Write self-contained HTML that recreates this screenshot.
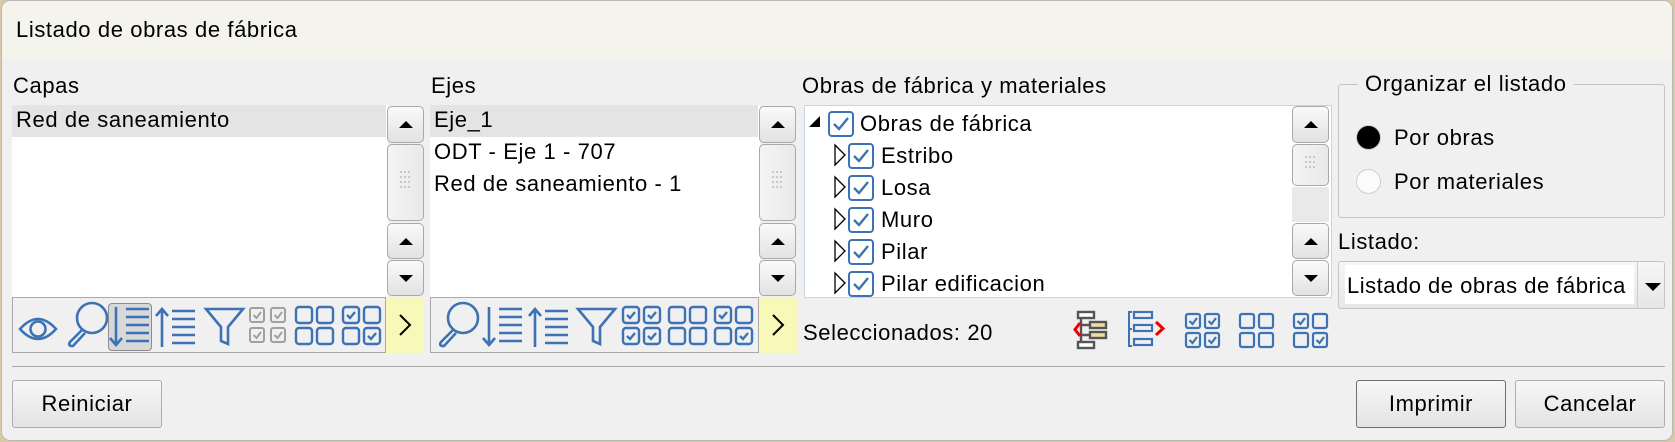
<!DOCTYPE html>
<html><head><meta charset="utf-8">
<style>
*{box-sizing:border-box;margin:0;padding:0}
body{width:1675px;height:442px;background:#d9c9a8;font-family:"Liberation Sans",sans-serif;font-size:22px;letter-spacing:0.6px;color:#000;position:relative;overflow:hidden}
.dlg{position:absolute;left:1px;top:0;width:1672px;height:441px;background:#f0f0f0;border:1px solid #b8b8b8;border-radius:9px;overflow:hidden}
.title{position:absolute;left:0;top:0;width:100%;height:58px;background:#f4f3ec}
.a{position:absolute}
.t{position:absolute;white-space:nowrap;line-height:1}
.list{position:absolute;background:#fff}
.sel{position:absolute;background:#e4e4e4}
.sb{position:absolute;width:37px;border:1px solid #a9a9a9;border-radius:5px;background:linear-gradient(#fafafa,#e2e2e2)}
.up::after,.dn::after{content:"";position:absolute;left:11px;top:14px;border-left:7px solid transparent;border-right:7px solid transparent}
.up::after{border-bottom:7px solid #000}
.dn::after{border-top:7px solid #000}
.thumb{background:linear-gradient(90deg,#f4f4f4,#e9e9e9)}
.tb{position:absolute;border:1px solid #a9a9a9;background:#f0f0f0}
.yl{position:absolute;background:#f8f8b8}
.btn{position:absolute;border:1px solid #adadad;border-radius:3px;background:linear-gradient(#f7f7f7,#e3e3e3);text-align:center;line-height:46px}
svg{position:absolute;overflow:visible}
</style></head><body>
<div class="dlg">
<div class="title"></div>
<div class="t" style="left:14px;top:18px;font-size:22px">Listado de obras de fábrica</div>

<!-- Capas -->
<div class="t" style="left:11px;top:74px">Capas</div>
<div class="list" style="left:10px;top:104px;width:376px;height:193px"></div>
<div class="sel" style="left:10px;top:104px;width:374px;height:32px"></div>
<div class="t" style="left:14px;top:108px">Red de saneamiento</div>
<div class="sb up" style="left:385px;top:105px;height:37px"></div>
<div class="sb thumb" style="left:385px;top:143px;height:77px"></div>
<svg style="left:398px;top:170px" width="12" height="22"><g fill="#c8c8c8"><rect x="0" y="0" width="2" height="2"/><rect x="4" y="0" width="2" height="2"/><rect x="8" y="0" width="2" height="2"/><rect x="0" y="5" width="2" height="2"/><rect x="4" y="5" width="2" height="2"/><rect x="8" y="5" width="2" height="2"/><rect x="0" y="10" width="2" height="2"/><rect x="4" y="10" width="2" height="2"/><rect x="8" y="10" width="2" height="2"/><rect x="0" y="15" width="2" height="2"/><rect x="4" y="15" width="2" height="2"/><rect x="8" y="15" width="2" height="2"/></g></svg>
<div class="sb up" style="left:385px;top:222px;height:36px"></div>
<div class="sb dn" style="left:385px;top:259px;height:36px"></div>
<div class="tb" style="left:10px;top:296px;width:374px;height:56px"></div>
<div class="yl" style="left:384px;top:296px;width:38px;height:56px"></div>
<svg style="left:393px;top:311px" width="20" height="26"><path d="M5 3 L15 13 L5 23" fill="none" stroke="#000" stroke-width="2"/></svg>

<!-- Capas icons -->
<svg style="left:16px;top:312px" width="42" height="34" fill="none" stroke="#3d72b4" stroke-width="2.6"><path d="M2 16 Q20 -4 38 16 Q20 36 2 16Z"/><circle cx="20" cy="16" r="7.5"/></svg>
<svg style="left:62px;top:300px" width="44" height="48" fill="none" stroke="#3d72b4" stroke-width="2.6"><circle cx="28" cy="17" r="15"/><path d="M18 29 L6 41 Q4 44 7 45 L9 45 L21 32"/></svg>
<div class="a" style="left:106px;top:302px;width:44px;height:48px;background:#d8d8d8;border:1px solid #8c8c8c;border-radius:4px"></div>
<svg style="left:106px;top:302px" width="44" height="48" fill="none" stroke="#3d72b4" stroke-width="2.6"><path d="M8 4 V42 M2 35 L8 42 L14 35 M18 6 H41 M18 14 H41 M18 22 H41 M18 30 H41 M18 38 H41"/></svg>
<svg style="left:152px;top:302px" width="44" height="48" fill="none" stroke="#3d72b4" stroke-width="2.6"><path d="M8 44 V6 M2 13 L8 6 L14 13 M18 8 H41 M18 16 H41 M18 24 H41 M18 32 H41 M18 40 H41"/></svg>
<svg style="left:202px;top:306px" width="42" height="40" fill="none" stroke="#3d72b4" stroke-width="2.6"><path d="M2 2 H39 L24 20 V37 L17 34 V20 Z"/></svg>
<svg style="left:247px;top:306px" width="40" height="40" fill="none" stroke="#a0a0a0" stroke-width="2"><rect x="1" y="1" width="14" height="14" rx="2"/><rect x="22" y="1" width="14" height="14" rx="2"/><rect x="1" y="21" width="14" height="14" rx="2"/><rect x="22" y="21" width="14" height="14" rx="2"/><path d="M4.5 8 L7.5 11 L12 5 M25.5 8 L28.5 11 L33 5 M4.5 28 L7.5 31 L12 25 M25.5 28 L28.5 31 L33 25"/></svg>
<svg style="left:293px;top:305px" width="40" height="40" fill="none" stroke="#3d72b4" stroke-width="2.4"><rect x="1" y="1" width="16" height="16" rx="3"/><rect x="22" y="1" width="16" height="16" rx="3"/><rect x="1" y="22" width="16" height="16" rx="3"/><rect x="22" y="22" width="16" height="16" rx="3"/></svg>
<svg style="left:340px;top:305px" width="40" height="40" fill="none" stroke="#3d72b4" stroke-width="2.4"><rect x="1" y="1" width="16" height="16" rx="3"/><rect x="22" y="1" width="16" height="16" rx="3"/><rect x="1" y="22" width="16" height="16" rx="3"/><rect x="22" y="22" width="16" height="16" rx="3"/><path d="M5 9 L8 12 L13 6 M26 30 L29 33 L34 27"/></svg>

<!-- Ejes -->
<div class="t" style="left:429px;top:74px">Ejes</div>
<div class="list" style="left:428px;top:104px;width:330px;height:193px"></div>
<div class="sel" style="left:428px;top:104px;width:328px;height:32px"></div>
<div class="t" style="left:432px;top:108px">Eje_1</div>
<div class="t" style="left:432px;top:140px">ODT - Eje 1 - 707</div>
<div class="t" style="left:432px;top:172px">Red de saneamiento - 1</div>
<div class="sb up" style="left:757px;top:105px;height:37px"></div>
<div class="sb thumb" style="left:757px;top:143px;height:77px"></div>
<svg style="left:770px;top:170px" width="12" height="22"><g fill="#c8c8c8"><rect x="0" y="0" width="2" height="2"/><rect x="4" y="0" width="2" height="2"/><rect x="8" y="0" width="2" height="2"/><rect x="0" y="5" width="2" height="2"/><rect x="4" y="5" width="2" height="2"/><rect x="8" y="5" width="2" height="2"/><rect x="0" y="10" width="2" height="2"/><rect x="4" y="10" width="2" height="2"/><rect x="8" y="10" width="2" height="2"/><rect x="0" y="15" width="2" height="2"/><rect x="4" y="15" width="2" height="2"/><rect x="8" y="15" width="2" height="2"/></g></svg>
<div class="sb up" style="left:757px;top:222px;height:36px"></div>
<div class="sb dn" style="left:757px;top:259px;height:36px"></div>
<div class="tb" style="left:428px;top:296px;width:329px;height:56px"></div>
<div class="yl" style="left:757px;top:296px;width:38px;height:56px"></div>
<svg style="left:766px;top:311px" width="20" height="26"><path d="M5 3 L15 13 L5 23" fill="none" stroke="#000" stroke-width="2"/></svg>
<svg style="left:433px;top:300px" width="44" height="48" fill="none" stroke="#3d72b4" stroke-width="2.6"><circle cx="28" cy="17" r="15"/><path d="M18 29 L6 41 Q4 44 7 45 L9 45 L21 32"/></svg>
<svg style="left:479px;top:302px" width="44" height="48" fill="none" stroke="#3d72b4" stroke-width="2.6"><path d="M8 4 V42 M2 35 L8 42 L14 35 M18 6 H41 M18 14 H41 M18 22 H41 M18 30 H41 M18 38 H41"/></svg>
<svg style="left:525px;top:302px" width="44" height="48" fill="none" stroke="#3d72b4" stroke-width="2.6"><path d="M8 44 V6 M2 13 L8 6 L14 13 M18 8 H41 M18 16 H41 M18 24 H41 M18 32 H41 M18 40 H41"/></svg>
<svg style="left:574px;top:306px" width="42" height="40" fill="none" stroke="#3d72b4" stroke-width="2.6"><path d="M2 2 H39 L24 20 V37 L17 34 V20 Z"/></svg>
<svg style="left:620px;top:305px" width="40" height="40" fill="none" stroke="#3d72b4" stroke-width="2.4"><rect x="1" y="1" width="16" height="16" rx="3"/><rect x="22" y="1" width="16" height="16" rx="3"/><rect x="1" y="22" width="16" height="16" rx="3"/><rect x="22" y="22" width="16" height="16" rx="3"/><path d="M5 9 L8 12 L13 6 M26 9 L29 12 L34 6 M5 30 L8 33 L13 27 M26 30 L29 33 L34 27"/></svg>
<svg style="left:666px;top:305px" width="40" height="40" fill="none" stroke="#3d72b4" stroke-width="2.4"><rect x="1" y="1" width="16" height="16" rx="3"/><rect x="22" y="1" width="16" height="16" rx="3"/><rect x="1" y="22" width="16" height="16" rx="3"/><rect x="22" y="22" width="16" height="16" rx="3"/></svg>
<svg style="left:712px;top:305px" width="40" height="40" fill="none" stroke="#3d72b4" stroke-width="2.4"><rect x="1" y="1" width="16" height="16" rx="3"/><rect x="22" y="1" width="16" height="16" rx="3"/><rect x="1" y="22" width="16" height="16" rx="3"/><rect x="22" y="22" width="16" height="16" rx="3"/><path d="M5 9 L8 12 L13 6 M26 30 L29 33 L34 27"/></svg>

<!-- Obras -->
<div class="t" style="left:800px;top:74px">Obras de fábrica y materiales</div>
<div class="list" style="left:802px;top:104px;width:528px;height:193px;border:1px solid #c9d5e4"></div>
<svg style="left:806px;top:114px" width="14" height="14"><path d="M12 1 V12 H1 Z" fill="#000"/></svg>
<svg style="left:826px;top:110px" width="27" height="27" fill="none" stroke="#3d72b4" stroke-width="2"><rect x="1" y="1" width="24" height="24" rx="3"/><path d="M6 13 L11 18 L20 7" stroke-width="2.4"/></svg>
<div class="t" style="left:858px;top:112px">Obras de fábrica</div>

<svg style="left:832px;top:143px" width="14" height="22"><path d="M1 1 L11 11 L1 21 Z" fill="#fff" stroke="#000" stroke-width="1.3"/></svg>
<svg style="left:846px;top:142px" width="27" height="27" fill="none" stroke="#3d72b4" stroke-width="2"><rect x="1" y="1" width="24" height="24" rx="3"/><path d="M6 13 L11 18 L20 7" stroke-width="2.4"/></svg>
<div class="t" style="left:879px;top:144px">Estribo</div>
<svg style="left:832px;top:175px" width="14" height="22"><path d="M1 1 L11 11 L1 21 Z" fill="#fff" stroke="#000" stroke-width="1.3"/></svg>
<svg style="left:846px;top:174px" width="27" height="27" fill="none" stroke="#3d72b4" stroke-width="2"><rect x="1" y="1" width="24" height="24" rx="3"/><path d="M6 13 L11 18 L20 7" stroke-width="2.4"/></svg>
<div class="t" style="left:879px;top:176px">Losa</div>
<svg style="left:832px;top:207px" width="14" height="22"><path d="M1 1 L11 11 L1 21 Z" fill="#fff" stroke="#000" stroke-width="1.3"/></svg>
<svg style="left:846px;top:206px" width="27" height="27" fill="none" stroke="#3d72b4" stroke-width="2"><rect x="1" y="1" width="24" height="24" rx="3"/><path d="M6 13 L11 18 L20 7" stroke-width="2.4"/></svg>
<div class="t" style="left:879px;top:208px">Muro</div>
<svg style="left:832px;top:239px" width="14" height="22"><path d="M1 1 L11 11 L1 21 Z" fill="#fff" stroke="#000" stroke-width="1.3"/></svg>
<svg style="left:846px;top:238px" width="27" height="27" fill="none" stroke="#3d72b4" stroke-width="2"><rect x="1" y="1" width="24" height="24" rx="3"/><path d="M6 13 L11 18 L20 7" stroke-width="2.4"/></svg>
<div class="t" style="left:879px;top:240px">Pilar</div>
<div class="a" style="left:803px;top:270px;width:485px;height:26px;overflow:hidden">
<svg style="left:29px;top:1px" width="14" height="22"><path d="M1 1 L11 11 L1 21 Z" fill="#fff" stroke="#000" stroke-width="1.3"/></svg>
<svg style="left:43px;top:0px" width="27" height="27" fill="none" stroke="#3d72b4" stroke-width="2"><rect x="1" y="1" width="24" height="24" rx="3"/><path d="M6 13 L11 18 L20 7" stroke-width="2.4"/></svg>
<div class="t" style="left:76px;top:2px">Pilar edificacion</div>
</div>
<div class="sb up" style="left:1290px;top:105px;height:37px"></div>
<div class="sb thumb" style="left:1290px;top:143px;height:42px"></div>
<svg style="left:1303px;top:155px" width="12" height="22"><g fill="#c8c8c8"><rect x="0" y="0" width="2" height="2"/><rect x="4" y="0" width="2" height="2"/><rect x="8" y="0" width="2" height="2"/><rect x="0" y="5" width="2" height="2"/><rect x="4" y="5" width="2" height="2"/><rect x="8" y="5" width="2" height="2"/><rect x="0" y="10" width="2" height="2"/><rect x="4" y="10" width="2" height="2"/><rect x="8" y="10" width="2" height="2"/></g></svg>
<div class="a" style="left:1290px;top:186px;width:37px;height:35px;background:#e9e9e9"></div>
<div class="sb up" style="left:1290px;top:222px;height:36px"></div>
<div class="sb dn" style="left:1290px;top:259px;height:36px"></div>

<div class="t" style="left:801px;top:321px">Seleccionados: 20</div>
<svg style="left:1070px;top:309px" width="40" height="40"><g fill="none" stroke="#555" stroke-width="2.4"><rect x="6" y="2" width="16" height="6" fill="#fff"/><rect x="18" y="12" width="16" height="6" fill="#f0dca0"/><rect x="18" y="22" width="16" height="6" fill="#f0dca0"/><rect x="6" y="32" width="16" height="6" fill="#fff"/><path d="M9 8 V32 M9 15 H18 M9 25 H18"/></g><path d="M8 13 L3 19.5 L8 26" fill="none" stroke="#e00" stroke-width="3"/></svg>
<svg style="left:1126px;top:309px" width="40" height="40" fill="none" stroke="#3d72b4" stroke-width="2"><path d="M4 2 H1 V36 H4 M1 19 H4"/><rect x="6" y="2" width="18" height="6" stroke-width="2.2"/><rect x="6" y="15" width="18" height="6" stroke-width="2.2"/><rect x="6" y="29" width="18" height="6" stroke-width="2.2"/><path d="M28 12 L35 18.5 L28 25" stroke="#e00" stroke-width="3"/></svg>
<svg style="left:1183px;top:312px" width="36" height="36" fill="none" stroke="#3d72b4" stroke-width="2.2"><rect x="1" y="1" width="14" height="14" rx="2"/><rect x="20" y="1" width="14" height="14" rx="2"/><rect x="1" y="20" width="14" height="14" rx="2"/><rect x="20" y="20" width="14" height="14" rx="2"/><path d="M4.5 8 L7.5 11 L12 5 M23.5 8 L26.5 11 L31 5 M4.5 27 L7.5 30 L12 24 M23.5 27 L26.5 30 L31 24"/></svg>
<svg style="left:1237px;top:312px" width="36" height="36" fill="none" stroke="#3d72b4" stroke-width="2.2"><rect x="1" y="1" width="14" height="14" rx="2"/><rect x="20" y="1" width="14" height="14" rx="2"/><rect x="1" y="20" width="14" height="14" rx="2"/><rect x="20" y="20" width="14" height="14" rx="2"/></svg>
<svg style="left:1291px;top:312px" width="36" height="36" fill="none" stroke="#3d72b4" stroke-width="2.2"><rect x="1" y="1" width="14" height="14" rx="2"/><rect x="20" y="1" width="14" height="14" rx="2"/><rect x="1" y="20" width="14" height="14" rx="2"/><rect x="20" y="20" width="14" height="14" rx="2"/><path d="M4.5 8 L7.5 11 L12 5 M23.5 27 L26.5 30 L31 24"/></svg>

<!-- Right panel -->
<div class="a" style="left:1336px;top:83px;width:327px;height:134px;border:1px solid #c4c4c4;border-radius:3px"></div>
<div class="t" style="left:1356px;top:72px;background:#f0f0f0;padding:0 7px">Organizar el listado</div>
<div class="a" style="left:1354px;top:124px;width:25px;height:25px;border-radius:50%;background:#000;border:1px solid #ccc"></div>
<div class="t" style="left:1392px;top:126px">Por obras</div>
<div class="a" style="left:1354px;top:168px;width:25px;height:25px;border-radius:50%;background:#fbfbfb;border:1px solid #cfcfcf"></div>
<div class="t" style="left:1392px;top:170px">Por materiales</div>
<div class="t" style="left:1336px;top:230px">Listado:</div>
<div class="a" style="left:1336px;top:260px;width:327px;height:48px;border:1px solid #c4c4c4;border-radius:3px;background:linear-gradient(#f6f6f6,#e6e6e6)"></div>
<div class="a" style="left:1343px;top:264px;width:289px;height:39px;background:#fff"></div>
<div class="t" style="left:1345px;top:274px;letter-spacing:0.5px">Listado de obras de fábrica</div>
<div class="a" style="left:1635px;top:261px;width:1px;height:46px;background:#ccc"></div>
<div class="a" style="left:1643px;top:282px;border-left:8px solid transparent;border-right:8px solid transparent;border-top:8px solid #000"></div>

<!-- bottom -->
<div class="a" style="left:10px;top:365px;width:1653px;height:1px;background:#a8a8a8"></div>
<div class="btn" style="left:10px;top:379px;width:150px;height:48px">Reiniciar</div>
<div class="btn" style="left:1354px;top:379px;width:150px;height:48px;border-color:#707070">Imprimir</div>
<div class="btn" style="left:1513px;top:379px;width:150px;height:48px">Cancelar</div>
</div>
</body></html>
